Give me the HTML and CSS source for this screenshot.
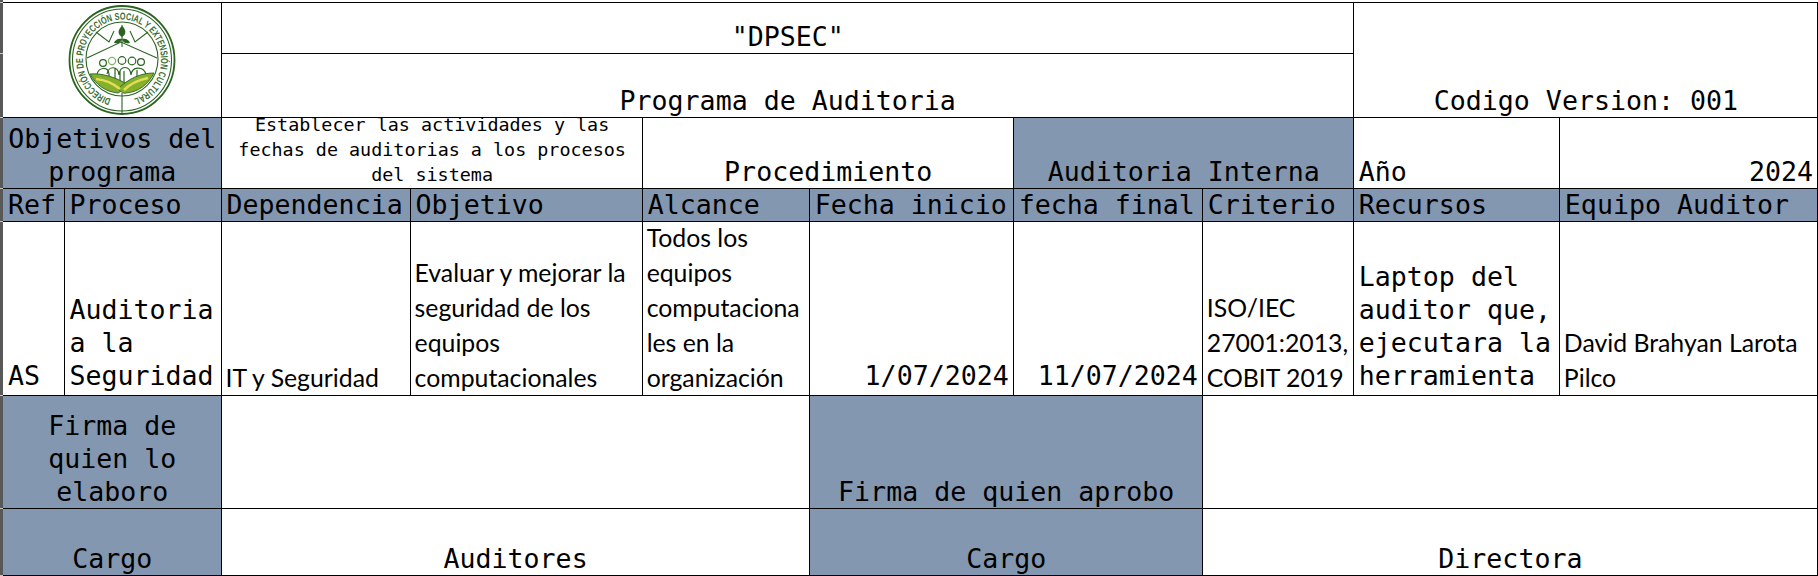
FILE: index.html
```html
<!DOCTYPE html>
<html lang="es">
<head>
    <meta charset="UTF-8">
    <meta name="viewport" content="width=device-width, initial-scale=1.0">
    <title>Programa de Auditoria</title>
    <link rel="stylesheet" href="styles.css">
</head>
<body>
    <div class="sheet">
        <div class="gutter"></div>
        <table class="audit">
            <colgroup>
                <col class="col-ref">
                <col class="col-proceso">
                <col class="col-dependencia">
                <col class="col-objetivo">
                <col class="col-alcance">
                <col class="col-inicio">
                <col class="col-final">
                <col class="col-criterio">
                <col class="col-recursos">
                <col class="col-equipo">
            </colgroup>
            <tr class="row-title">
                <td colspan="2" rowspan="2" class="logo-cell">
                    <svg class="logo" viewBox="0 0 108 110" aria-label="Logo">
                        <defs>
                            <path id="ring" d="M43,94 A39,40.5 0 1 1 65,94"/>
                        </defs>
                        <ellipse class="ln-thick" cx="54" cy="55" rx="52.5" ry="54"/>
                        <ellipse class="ln" cx="54" cy="55" rx="49.5" ry="51"/>
                        <text class="ring-text"><textPath href="#ring" textLength="226" lengthAdjust="spacingAndGlyphs">DIRECCIÓN DE PROYECCIÓN SOCIAL Y EXTENSIÓN CULTURAL</textPath></text>
                        <ellipse class="ln" cx="54" cy="54" rx="36" ry="37"/>
                        <path class="ln" d="M19,53 L53,37 L89,53"/>
                        <path class="ln" d="M28,27 L41,37 L46,26 M80,27 L67,37 L62,26"/>
                        <path class="ln" d="M54,20 V42"/>
                        <path class="leaf" d="M54,21 C49,25 50,30 54,32 C58,30 59,25 54,21 Z M54,34 C50,33 47,35 46,38 C50,39 53,38 54,34 Z M54,34 C58,33 61,35 62,38 C58,39 55,38 54,34 Z"/>
                        <g class="people">
                            <circle cx="35" cy="58" r="3.4"/>
                            <circle class="head-light" cx="44" cy="56" r="3.6"/>
                            <circle cx="54" cy="55.5" r="3.8"/>
                            <circle cx="64" cy="56" r="3.8"/>
                            <circle cx="73" cy="57" r="3.4"/>
                            <path d="M29,70 C30,62 40,61 41,69 V74 M39,69 C40,61 50,60 51,70 M47,76 V63 M51,70 C52,60 62,60 63,70 M52,80 V66 M56,80 V66 M63,70 C64,61 75,61 78,69 M69,65 V75"/>
                        </g>
                        <path class="hill" d="M22,69 C34,68 48,72 60,80 C56,84 52,87 50,88 C38,87 28,80 22,69 Z"/>
                        <path class="hill" d="M86,68 C72,68 60,74 50,84 C53,87 56,89 58,88 C70,87 80,80 86,68 Z"/>
                        <path class="hill-band" d="M28,74 C38,75 46,79 52,84 M80,73 C70,75 62,79 56,85"/>
                        <path class="ln" d="M54,88 V108"/>
                    </svg>
                </td>
                <td colspan="6" class="mono center">"DPSEC"</td>
                <td colspan="2" rowspan="2" class="mono center">Codigo Version: 001</td>
            </tr>
            <tr class="row-subtitle">
                <td colspan="6" class="mono center">Programa de Auditoria</td>
            </tr>
            <tr class="row-info">
                <td colspan="2" class="mono center band">Objetivos del<br>programa</td>
                <td colspan="2" class="mono-small center"><div class="pull">Establecer las actividades y las<br>fechas de auditorias a los procesos<br>del sistema</div></td>
                <td colspan="2" class="mono center">Procedimiento</td>
                <td colspan="2" class="mono center band">Auditoria Interna</td>
                <td class="mono">Año</td>
                <td class="mono right">2024</td>
            </tr>
            <tr class="row-head band">
                <td class="mono">Ref</td>
                <td class="mono">Proceso</td>
                <td class="mono">Dependencia</td>
                <td class="mono">Objetivo</td>
                <td class="mono">Alcance</td>
                <td class="mono">Fecha inicio</td>
                <td class="mono">fecha final</td>
                <td class="mono">Criterio</td>
                <td class="mono">Recursos</td>
                <td class="mono">Equipo Auditor</td>
            </tr>
            <tr class="row-data">
                <td class="mono">AS</td>
                <td class="mono">Auditoria<br>a la<br>Seguridad</td>
                <td class="body-text">IT y Seguridad</td>
                <td class="body-text">Evaluar y mejorar la<br>seguridad de los<br>equipos<br>computacionales</td>
                <td class="body-text"><div class="pull-small">Todos los<br>equipos<br>computaciona<br>les en la<br>organización</div></td>
                <td class="mono right">1/07/2024</td>
                <td class="mono right">11/07/2024</td>
                <td class="body-text">ISO/IEC<br>27001:2013,<br>COBIT 2019</td>
                <td class="mono">Laptop del<br>auditor que,<br>ejecutara la<br>herramienta</td>
                <td class="body-text">David Brahyan Larota<br>Pilco</td>
            </tr>
            <tr class="row-sign">
                <td colspan="2" class="mono center band">Firma de<br>quien lo<br>elaboro</td>
                <td colspan="3"></td>
                <td colspan="2" class="mono center band">Firma de quien aprobo</td>
                <td colspan="3"></td>
            </tr>
            <tr class="row-role">
                <td colspan="2" class="mono center band">Cargo</td>
                <td colspan="3" class="mono center">Auditores</td>
                <td colspan="2" class="mono center band">Cargo</td>
                <td colspan="3" class="mono center">Directora</td>
            </tr>
        </table>
    </div>
</body>
</html>
```

FILE: styles.css
```css
body {
    margin: 0;
    padding: 0;
    background-color: #fff;
    color: #000;
    overflow: hidden;
}

.sheet {
    display: flex;
    align-items: flex-start;
}

/* row header strip on the left, lighter tick at each row line */
.gutter {
    width: 3px;
    height: 576px;
    flex: none;
    background-color: #585858;
    background-image:
        linear-gradient(#c8c8c8, #c8c8c8),
        linear-gradient(#c8c8c8, #c8c8c8),
        linear-gradient(#c8c8c8, #c8c8c8),
        linear-gradient(#c8c8c8, #c8c8c8),
        linear-gradient(#c8c8c8, #c8c8c8),
        linear-gradient(#c8c8c8, #c8c8c8),
        linear-gradient(#c8c8c8, #c8c8c8),
        linear-gradient(#c8c8c8, #c8c8c8);
    background-repeat: no-repeat;
    background-size: 3px 1px;
    background-position: 0 2px, 0 53px, 0 117px, 0 188px, 0 221px, 0 395px, 0 508px, 0 575px;
}

.audit {
    margin-top: 2px;
    width: 1815px;
    flex: none;
    table-layout: fixed;
    border-collapse: collapse;
    border-left: 0;
}

.audit td {
    border: 1px solid #000;
    padding: 0 4px 0 5px;
    vertical-align: bottom;
    overflow: visible;
    white-space: nowrap;
}

.audit tr td:first-child {
    border-left: 0;
}

.col-ref { width: 61px; }
.col-proceso { width: 157px; }
.col-dependencia { width: 189px; }
.col-objetivo { width: 232px; }
.col-alcance { width: 167px; }
.col-inicio { width: 204px; }
.col-final { width: 189px; }
.col-criterio { width: 151px; }
.col-recursos { width: 206px; }
.col-equipo { width: 258px; }

.row-title { height: 51px; }
.row-subtitle { height: 64px; }
.row-info { height: 71px; }
.row-head { height: 33px; }
.row-data { height: 174px; }
.row-sign { height: 113px; }
.row-role { height: 67px; }

.band,
.band td {
    background-color: #8497b0;
}

.mono {
    font-family: "DejaVu Sans Mono", monospace;
    font-size: 26.6px;
    line-height: 33px;
}

.row-head .mono {
    line-height: 32px;
}

.audit .row-data .mono {
    padding-bottom: 3px;
}

.mono-small {
    font-family: "DejaVu Sans Mono", monospace;
    font-size: 18.4px;
    line-height: 25px;
}

.audit .body-text {
    font-family: Lato, sans-serif;
    font-size: 24.8px;
    line-height: 35px;
    padding-left: 4px;
}

.audit .center { text-align: center; }
.audit .right { text-align: right; }

.pull {
    margin-top: -7px;
    padding-bottom: 1px;
}

.pull-small { margin-top: -3px; }

.audit .logo-cell {
    padding: 0 0 0 20px;
    text-align: center;
    vertical-align: middle;
}

.logo {
    display: block;
    width: 108px;
    height: 110px;
    margin: 0 auto;
    fill: none;
}

.ln {
    fill: none;
    stroke: #2a6420;
    stroke-width: 1.1;
}

.ln-thick {
    fill: none;
    stroke: #2a6420;
    stroke-width: 1.8;
}

.ring-text {
    font-family: "Liberation Sans", sans-serif;
    font-size: 10px;
    font-weight: bold;
    fill: #3c6e34;
}

.leaf {
    fill: #2a6420;
}

.people {
    fill: none;
    stroke: #2a6420;
    stroke-width: 1.2;
}

.head-light {
    stroke: #7fb56a;
}

.hill {
    fill: #86b02c;
    stroke: #2a6420;
    stroke-width: 0.9;
}

.hill-band {
    fill: none;
    stroke: #e3dd55;
    stroke-width: 2.6;
}
```
